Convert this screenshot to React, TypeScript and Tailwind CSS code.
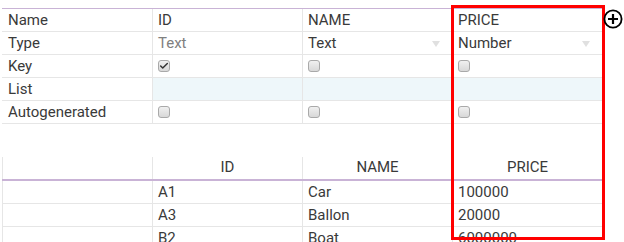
import { Check } from "lucide-react";

type Cell = { kind: "text"; value: string; muted?: boolean; select?: boolean } | { kind: "check"; checked?: boolean } | { kind: "empty" };

const defRows: { label: string; bg?: string; cells: Cell[] }[] = [
  {
    label: "Name",
    cells: [
      { kind: "text", value: "ID" },
      { kind: "text", value: "NAME" },
      { kind: "text", value: "PRICE" },
    ],
  },
  {
    label: "Type",
    cells: [
      { kind: "text", value: "Text", muted: true },
      { kind: "text", value: "Text", select: true },
      { kind: "text", value: "Number", select: true },
    ],
  },
  {
    label: "Key",
    cells: [{ kind: "check", checked: true }, { kind: "check" }, { kind: "check" }],
  },
  {
    label: "List",
    bg: "bg-[#eef7fa]",
    cells: [{ kind: "empty" }, { kind: "empty" }, { kind: "empty" }],
  },
  {
    label: "Autogenerated",
    cells: [{ kind: "check" }, { kind: "check" }, { kind: "check" }],
  },
];

const data = [
  ["A1", "Car", "100000"],
  ["A3", "Ballon", "20000"],
  ["B2", "Boat", "6000000"],
];

function Checkbox({ checked }: { checked?: boolean }) {
  return (
    <span className="flex h-[12px] w-[12px] items-center justify-center rounded-[3px] border border-[#a9a9a9] bg-gradient-to-b from-[#f0f0f0] to-[#d8d8d8]">
      {checked && <Check size={10} strokeWidth={3.5} className="text-[#333]" />}
    </span>
  );
}

function DefCell({ cell }: { cell: Cell }) {
  return (
    <div className="relative flex h-full items-center border-l border-[#e6e6e6] pl-[5px]">
      {cell.kind === "text" && (
        <span className={cell.muted ? "text-[#808080]" : "text-[#3a3a3a]"}>{cell.value}</span>
      )}
      {cell.kind === "text" && cell.select && (
        <span className="absolute right-[12px] top-[9px] h-0 w-0 border-x-[4px] border-t-[6px] border-x-transparent border-t-[#e0e0e0]" />
      )}
      {cell.kind === "check" && <Checkbox checked={cell.checked} />}
    </div>
  );
}

export default function App() {
  return (
    <div className="relative h-[242px] w-[624px] overflow-hidden bg-white font-['Roboto',sans-serif] text-[15px] leading-none">
      <div className="pl-[2px] pt-[8px]">
        {/* column definitions */}
        <div className="w-[600px] border-t border-[#c9b3d6]">
          {defRows.map((row) => (
            <div
              key={row.label}
              className={`grid h-[23px] grid-cols-[150px_150px_150px_150px] border-b border-[#e6e6e6] ${row.bg ?? ""}`}
            >
              <div className="flex items-center pl-[6px] text-[#3a3a3a] bg-white">{row.label}</div>
              {row.cells.map((c, i) => (
                <DefCell key={i} cell={c} />
              ))}
            </div>
          ))}
        </div>

        {/* data preview */}
        <div className="mt-[33px] w-[600px]">
          <div className="grid h-[24px] grid-cols-[150px_150px_150px_150px] border-b-2 border-[#c9b3d6]">
            <div className="border-l border-[#e6e6e6]" />
            {["ID", "NAME", "PRICE"].map((h) => (
              <div key={h} className="flex items-end justify-center border-l border-[#e6e6e6] pb-[4px] text-[#3a3a3a]">
                {h}
              </div>
            ))}
          </div>
          {data.map((r) => (
            <div key={r[0]} className="grid h-[23px] grid-cols-[150px_150px_150px_150px] border-b border-[#e6e6e6]">
              <div className="border-l border-[#e6e6e6]" />
              {r.map((v, i) => (
                <div key={i} className="flex items-center border-l border-[#e6e6e6] pl-[5px] text-[#3a3a3a]">
                  {v}
                </div>
              ))}
            </div>
          ))}
        </div>
      </div>

      {/* highlight overlay */}
      <div className="pointer-events-none absolute left-[451px] top-[5px] h-[235px] w-[154px] border-[3px] border-[#ff0000]" />

      {/* add column */}
      <svg className="absolute left-[603px] top-[9px]" width="20" height="20" viewBox="0 0 20 20">
        <circle cx="10" cy="10" r="8.6" fill="white" stroke="black" strokeWidth="1.8" />
        <path d="M10 5v10M5 10h10" stroke="black" strokeWidth="2.2" />
      </svg>
    </div>
  );
}
